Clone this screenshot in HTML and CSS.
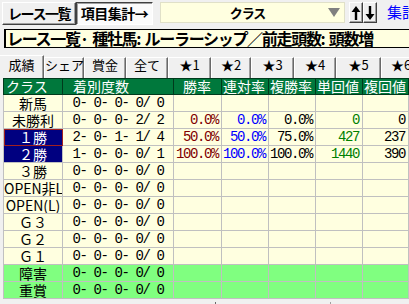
FILE: index.html
```html
<!DOCTYPE html>
<html>

<head>
    <title>項目集計</title>
    <meta charset="UTF-8">
    <link rel="stylesheet" href="styles.css">
</head>

<body>
    <div class="toolbar">
        <button class="btn btn-list">レース一覧</button>
        <button class="btn btn-pressed">項目集計→</button>
        <div class="select">
            <span class="select-text">クラス</span>
            <svg class="select-arrow" width="12" height="9" viewBox="0 0 12 9"><path d="M0 0 H12 L6 9 Z" fill="#808080"/></svg>
        </div>
        <button class="btn btn-arrow">
            <svg width="10" height="16" viewBox="0 0 10 16"><path d="M5 1 L9.5 7 H6.2 V15 H3.8 V7 H0.5 Z" fill="#000"/></svg>
        </button>
        <button class="btn btn-arrow">
            <svg width="10" height="16" viewBox="0 0 10 16"><path d="M5 15 L9.5 9 H6.2 V1 H3.8 V9 H0.5 Z" fill="#000"/></svg>
        </button>
        <span class="link">集計</span>
    </div>

    <div class="caption">レース一覧· 種牡馬: ルーラーシップ／前走頭数: 頭数増</div>

    <div class="tabs">
        <div class="tab active" style="width:44px">成績</div>
        <div class="tab" style="width:40px">シェア</div>
        <div class="tab" style="width:42px">賞金</div>
        <div class="tab" style="width:42px">全て</div>
        <div class="tab" style="width:43px">★1</div>
        <div class="tab" style="width:40px">★2</div>
        <div class="tab" style="width:43px">★3</div>
        <div class="tab" style="width:42px">★4</div>
        <div class="tab" style="width:45px">★5</div>
        <div class="tab" style="width:40px">★6</div>
    </div>

    <table class="grid">
        <colgroup>
            <col style="width:59px">
            <col style="width:111px">
            <col style="width:48px">
            <col style="width:47px">
            <col style="width:47px">
            <col style="width:47px">
            <col style="width:46px">
        </colgroup>
        <thead>
            <tr>
                <th class="h-class">クラス</th>
                <th class="h-count">着別度数</th>
                <th class="h-win">勝率</th>
                <th>連対率</th>
                <th>複勝率</th>
                <th>単回値</th>
                <th>複回値</th>
            </tr>
        </thead>
        <tbody>
            <tr>
                <td class="name">新馬</td><td class="count">0- 0- 0- 0/ 0</td>
                <td></td><td></td><td></td><td></td><td></td>
            </tr>
            <tr>
                <td class="name">未勝利</td><td class="count">0- 0- 0- 2/ 2</td>
                <td class="num red">0.0%</td><td class="num blue">0.0%</td><td class="num">0.0%</td><td class="num green">0</td><td class="num">0</td>
            </tr>
            <tr>
                <td class="name selected focus">１勝</td><td class="count">2- 0- 1- 1/ 4</td>
                <td class="num red">50.0%</td><td class="num blue">50.0%</td><td class="num">75.0%</td><td class="num green">427</td><td class="num">237</td>
            </tr>
            <tr>
                <td class="name selected">２勝</td><td class="count">1- 0- 0- 0/ 1</td>
                <td class="num red">100.0%</td><td class="num blue">100.0%</td><td class="num">100.0%</td><td class="num green">1440</td><td class="num">390</td>
            </tr>
            <tr>
                <td class="name">３勝</td><td class="count">0- 0- 0- 0/ 0</td>
                <td></td><td></td><td></td><td></td><td></td>
            </tr>
            <tr>
                <td class="name">OPEN非L</td><td class="count">0- 0- 0- 0/ 0</td>
                <td></td><td></td><td></td><td></td><td></td>
            </tr>
            <tr>
                <td class="name">OPEN(L)</td><td class="count">0- 0- 0- 0/ 0</td>
                <td></td><td></td><td></td><td></td><td></td>
            </tr>
            <tr>
                <td class="name">Ｇ３</td><td class="count">0- 0- 0- 0/ 0</td>
                <td></td><td></td><td></td><td></td><td></td>
            </tr>
            <tr>
                <td class="name">Ｇ２</td><td class="count">0- 0- 0- 0/ 0</td>
                <td></td><td></td><td></td><td></td><td></td>
            </tr>
            <tr>
                <td class="name">Ｇ１</td><td class="count">0- 0- 0- 0/ 0</td>
                <td></td><td></td><td></td><td></td><td></td>
            </tr>
            <tr class="jump">
                <td class="name">障害</td><td class="count">0- 0- 0- 0/ 0</td>
                <td></td><td></td><td></td><td></td><td></td>
            </tr>
            <tr class="jump">
                <td class="name">重賞</td><td class="count">0- 0- 0- 0/ 0</td>
                <td></td><td></td><td></td><td></td><td></td>
            </tr>
        </tbody>
    </table>

    <div class="footer">
        <div class="footer-part" style="width:114px"></div>
        <div class="footer-part light" style="width:80px"></div>
    </div>
</body>

</html>
```

FILE: styles.css
```css
body {
    margin: 0;
    width: 409px;
    height: 304px;
    overflow: hidden;
    background: #f0f0f0;
    font-family: "Noto Sans CJK JP", sans-serif;
    color: #000;
}
.toolbar {
    display: flex;
    align-items: flex-start;
    height: 27px;
    padding: 2px 0 0 2px;
    box-sizing: border-box;
    overflow: hidden;
}
.toolbar > * {
    flex: none;
}
.btn {
    height: 23px;
    padding: 0;
    margin: 0;
    background: #f0f0f0;
    border: 1px solid;
    border-color: #fff #404040 #404040 #fff;
    box-shadow: inset -1px -1px #a0a0a0;
    font-family: "Noto Sans CJK JP", sans-serif;
    font-weight: bold;
    font-size: 14px;
    line-height: 19px;
    color: #000;
    white-space: nowrap;
}
.btn-list {
    width: 74px;
    letter-spacing: -1.5px;
}
.btn-pressed {
    width: 77px;
    background: #fbfbfb;
    border-color: #404040 #fff #fff #404040;
    box-shadow: inset 1px 1px #a0a0a0;
    letter-spacing: -0.5px;
}
.select {
    display: flex;
    align-items: center;
    width: 185px;
    height: 21px;
    margin-left: 7px;
    background: #ffffe0;
    border: 1px solid #e0e0c8;
    box-sizing: border-box;
}
.select-text {
    flex: 1;
    text-align: center;
    font-weight: bold;
    font-size: 13px;
    letter-spacing: -1px;
    padding-left: 6px;
}
.select-arrow {
    margin-right: 4px;
}
.btn-arrow {
    width: 14px;
    height: 21px;
    display: flex;
    align-items: center;
    justify-content: center;
}
.select + .btn-arrow {
    margin-left: 4px;
}
.link {
    margin-left: 10px;
    margin-top: 1px;
    color: #0000ff;
    font-size: 15px;
    line-height: 18px;
    white-space: nowrap;
}
.caption {
    margin: 2px 0 0 4px;
    height: 19px;
    box-sizing: border-box;
    background: #ffffe0;
    border: 1px solid #000;
    border-left-width: 2px;
    border-right: none;
    padding-left: 1px;
    font-weight: bold;
    font-size: 16px;
    line-height: 16px;
    letter-spacing: -1.3px;
    word-spacing: 2px;
    white-space: pre;
    overflow: hidden;
}
.tabs {
    display: flex;
    height: 23px;
    margin-top: 7px;
    overflow: hidden;
}
.tab {
    flex: none;
    height: 21px;
    margin-top: 2px;
    box-sizing: border-box;
    border-top: 1px solid #fff;
    border-left: 1px solid #fff;
    border-right: 1px solid #696969;
    box-shadow: inset -1px 0 #a0a0a0;
    text-align: center;
    font-size: 13px;
    line-height: 14px;
    white-space: nowrap;
}
.tab.active {
    height: 23px;
    margin-top: 0;
    padding-top: 2px;
    border-left: none;
}
.grid {
    margin-left: 3px;
    width: 405px;
    table-layout: fixed;
    border-collapse: collapse;
    font-size: 14px;
}
.grid th {
    height: 15px;
    padding: 0 0 0 1px;
    background: #00783c;
    color: #fff;
    font-weight: normal;
    text-align: left;
    line-height: 15px;
    border: 1px solid #003a1c;
    white-space: nowrap;
    overflow: hidden;
}
.grid th.h-class {
    padding-left: 2px;
}
.grid th.h-count {
    padding-left: 10px;
}
.grid th.h-win {
    padding-left: 9px;
}
.grid td {
    height: 16px;
    padding: 0;
    background: #ffffe0;
    border: 1px solid #c0c0c0;
    line-height: 15px;
    white-space: nowrap;
    overflow: hidden;
}
.grid tr.jump td {
    background: #80ff80;
}
.grid td.name {
    text-align: center;
}
.grid td.selected {
    background: #000080;
    color: #fff;
}
.grid td.focus {
    outline: 1px solid #a02020;
    outline-offset: -1px;
}
.grid td.count,
.grid td.num {
    font-family: "Liberation Mono", monospace;
    letter-spacing: -1.4px;
    white-space: pre;
}
.grid td.count {
    text-align: center;
}
.grid td.num {
    text-align: right;
    padding-right: 3px;
}
.red {
    color: #800000;
}
.blue {
    color: #0000ff;
}
.green {
    color: #008000;
}
.footer {
    display: flex;
    height: 6px;
    margin-top: 3px;
    padding-left: 215px;
}
.footer-part {
    flex: none;
    border-left: 1px solid #696969;
}
.footer-part.light {
    border-left-color: #a0a0a0;
}
```
